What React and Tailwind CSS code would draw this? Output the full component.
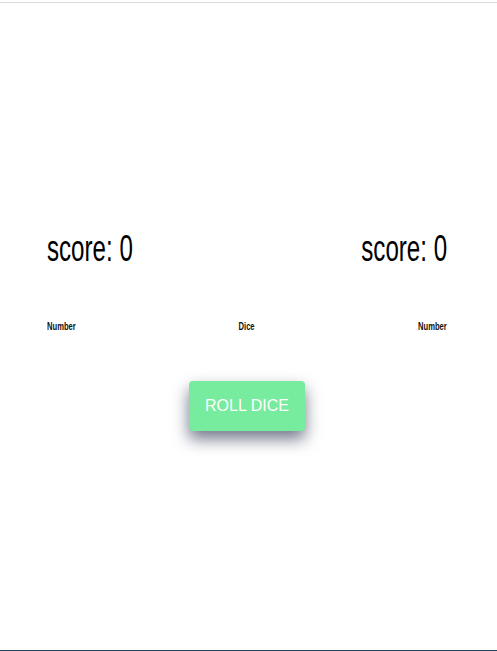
function App() {
    return (
        <div className="relative h-[651px] w-full bg-white overflow-hidden">
            <div className="h-[2px]" />
            <div className="h-px bg-[#dadada]" />
            <div className="ml-[47px] w-[400px] pt-[222px]">
                <div className="flex items-center justify-between text-[36px] leading-[48px] text-black font-['Liberation_Sans',sans-serif]">
                    <span className="inline-block origin-left scale-x-[0.67] whitespace-nowrap">score: 0</span>
                    <span className="inline-block origin-right scale-x-[0.67] whitespace-nowrap">score: 0</span>
                </div>
                <div className="mt-[46px] flex items-center justify-between text-[10px] font-bold text-[#111] font-['Liberation_Sans',sans-serif]">
                    <span className="inline-block origin-left scale-x-[0.76]">Number</span>
                    <span className="inline-block scale-x-[0.76]">Dice</span>
                    <span className="inline-block origin-right scale-x-[0.76]">Number</span>
                </div>
                <div className="mt-[47px] flex justify-center">
                    <button
                        type="button"
                        className="h-[50px] w-[116px] rounded bg-[#77eb9e] text-[16px] text-white shadow-[0_8px_16px_rgba(20,30,60,0.6)] font-['Liberation_Sans',sans-serif]"
                    >
                        ROLL DICE
                    </button>
                </div>
            </div>
            <div className="absolute bottom-0 left-0 right-0 h-px bg-[#1d4566]" />
        </div>
    );
}

export default App;
